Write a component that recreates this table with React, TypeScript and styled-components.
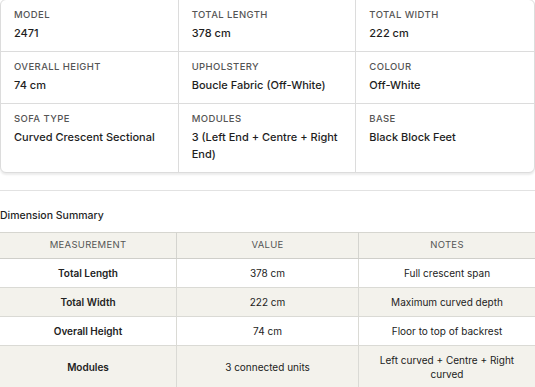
import React from "react";
import styled, { createGlobalStyle } from "styled-components";

const Global = createGlobalStyle`
  html, body { margin: 0; padding: 0; background: #ffffff; }
  body { font-family: Inter, "Noto Sans", sans-serif; color: #1f1f1f; overflow: hidden; }
`;

const Page = styled.div`
  width: 535px;
  display: flex;
  flex-direction: column;
`;

const SpecCard = styled.div`
  margin-top: -1px;
  display: grid;
  grid-template-columns: repeat(3, 1fr);
  border: 1px solid #dcdcdc;
  border-radius: 6px;
  box-shadow: 0 2px 2px rgba(0, 0, 0, 0.08);
  background: #fff;
  overflow: hidden;
`;

const SpecCell = styled.div<{ $lastCol: boolean; $lastRow: boolean }>`
  padding: 8px 13px 9px 13px;
  border-right: ${(p) => (p.$lastCol ? "none" : "1px solid #dcdcdc")};
  border-bottom: ${(p) => (p.$lastRow ? "none" : "1px solid #dcdcdc")};
  display: flex;
  flex-direction: column;
  gap: 3px;
`;

const SpecLabel = styled.div`
  font-size: 9.5px;
  line-height: 14px;
  letter-spacing: 0.4px;
  text-transform: uppercase;
  color: #555;
  font-weight: 500;
`;

const SpecValue = styled.div`
  font-size: 11px;
  line-height: 17px;
  font-weight: 500;
  color: #1e1e1e;
`;

const Rule = styled.hr`
  margin: 17px 0 0 0;
  border: none;
  border-top: 1px solid #e2e2e2;
`;

const SectionTitle = styled.div`
  margin-top: 18px;
  font-size: 10.5px;
  line-height: 14px;
  font-weight: 500;
  color: #1f1f1f;
`;

const Table = styled.table`
  margin-top: 9px;
  width: 535px;
  border-collapse: collapse;
  font-size: 10px;
`;

const HeadCell = styled.th`
  background: #f3f2ec;
  border-top: 1px solid #d6d6d0;
  border-bottom: 1px solid #cfcfca;
  border-right: 1px solid #d4d4cf;
  font-weight: 400;
  font-size: 9.5px;
  color: #555;
  text-transform: uppercase;
  letter-spacing: 0.3px;
  line-height: 14px;
  padding: 5px 8px 6px;
  &:last-child { border-right: none; }
`;

const Row = styled.tr<{ $shade: boolean }>`
  background: ${(p) => (p.$shade ? "#f3f2ec" : "#ffffff")};
`;

const Cell = styled.td<{ $strong?: boolean }>`
  text-align: center;
  border-bottom: 1px solid #dadad5;
  border-right: 1px solid #dadad5;
  color: #222;
  font-weight: ${(p) => (p.$strong ? 600 : 400)};
  line-height: 14px;
  padding: 7px 18px;
  &:last-child { border-right: none; }
`;

const specs = [
  ["Model", "2471"],
  ["Total Length", "378 cm"],
  ["Total Width", "222 cm"],
  ["Overall Height", "74 cm"],
  ["Upholstery", "Boucle Fabric (Off-White)"],
  ["Colour", "Off-White"],
  ["Sofa Type", "Curved Crescent Sectional"],
  ["Modules", "3 (Left End + Centre + Right End)"],
  ["Base", "Black Block Feet"],
];

const rows = [
  ["Total Length", "378 cm", "Full crescent span"],
  ["Total Width", "222 cm", "Maximum curved depth"],
  ["Overall Height", "74 cm", "Floor to top of backrest"],
  ["Modules", "3 connected units", "Left curved + Centre + Right curved"],
];

export default function App() {
  return (
    <Page>
      <Global />
      <SpecCard>
        {specs.map(([label, value], i) => (
          <SpecCell key={label} $lastCol={i % 3 === 2} $lastRow={i >= 6}>
            <SpecLabel>{label}</SpecLabel>
            <SpecValue>{value}</SpecValue>
          </SpecCell>
        ))}
      </SpecCard>
      <Rule />
      <SectionTitle>Dimension Summary</SectionTitle>
      <Table>
        <thead>
          <tr>
            <HeadCell style={{ width: 160 }}>Measurement</HeadCell>
            <HeadCell>Value</HeadCell>
            <HeadCell style={{ width: 160 }}>Notes</HeadCell>
          </tr>
        </thead>
        <tbody>
          {rows.map((r, i) => (
            <Row key={r[0]} $shade={i % 2 === 1}>
              <Cell $strong>{r[0]}</Cell>
              <Cell>{r[1]}</Cell>
              <Cell>{r[2]}</Cell>
            </Row>
          ))}
        </tbody>
      </Table>
    </Page>
  );
}
